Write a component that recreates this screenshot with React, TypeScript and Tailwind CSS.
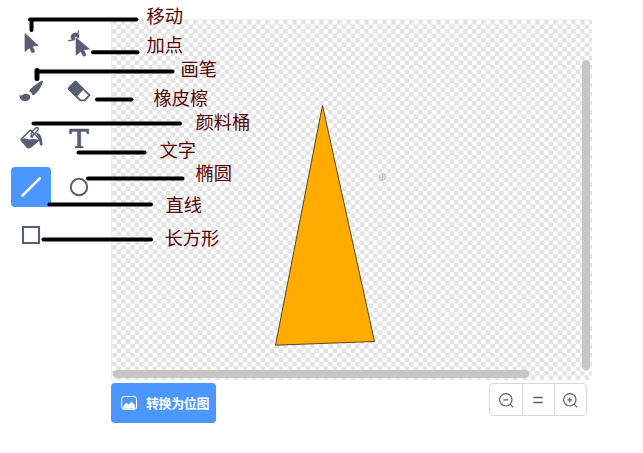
import React from "react";

const ink = "#575e75";

const labels = [
  { text: "移动", pos: "left-[146.5px] top-[2px]" },
  { text: "加点", pos: "left-[146.5px] top-[31px]" },
  { text: "画笔", pos: "left-[180.5px] top-[55px]" },
  { text: "橡皮檫", pos: "left-[153.5px] top-[84px]" },
  { text: "颜料桶", pos: "left-[195.5px] top-[108px]" },
  { text: "文字", pos: "left-[159.5px] top-[136px]" },
  { text: "椭圆", pos: "left-[195.5px] top-[159px]" },
  { text: "直线", pos: "left-[165.5px] top-[191px]" },
  { text: "长方形", pos: "left-[164.5px] top-[224px]" },
];

const tools: { name: string; active?: boolean; icon: React.ReactNode }[] = [
  {
    name: "select",
    icon: <path d="M14 10.500v18l4.500-3.800 2.200 4.600c1.100.900 3.300-.2 2.700-1.600l-2.100-4.400 5.800-.9Z" fill={ink} stroke={ink} strokeWidth=".7" strokeLinejoin="round" />,
  },
  {
    name: "reshape",
    icon: (
      <g fill={ink}>
        <path d="M9.200 17.600c4.500.2 9.800-3.200 10.300-10.200" fill="none" stroke={ink} strokeWidth="1.200" />
        <path d="M11.600 14.400Q12 10 17 9.600L20 11.500v3L15.500 17.500h-2.200Z" />
        <path d="M17 14.700v17.500l4.700-3.700 2.400 4.400c1.100.900 3.300-.2 2.700-1.600l-2.200-4.400 5.800-1Z" stroke={ink} strokeWidth=".6" strokeLinejoin="round" />
        <path d="M16.300 18v-3.700l2 .4" fill="none" stroke="#fff" strokeWidth=".8" />
      </g>
    ),
  },
  {
    name: "brush",
    icon: (
      <g fill={ink}>
        <path d="M31.500 10.200c.6.6.3 1.600-.4 3-1.700 3.800-4 7.400-6.800 9.800-1 .9-2.100 1.100-3 1.200-.1-2-1.300-3.300-3-3.700.4-1.700 1.500-3 3.200-4.300 2.700-2.100 5.900-4.600 8.300-6 .8-.5 1.300-.4 1.700 0Z" />
        <path d="M8.200 24.300c1.500.6 3 .2 4.100-.8 2.300-1.700 6.600-.7 7 2.100.2 2.800-2.100 4.600-5.300 4.600-3.400 0-5.100-2.400-5.800-5.900Z" />
      </g>
    ),
  },
  {
    name: "eraser",
    icon: (
      <g stroke={ink} strokeWidth="1.800" strokeLinejoin="round">
        <path d="m9.600 17.600 6.800-7L30.500 24.200l-4.700 5.200h-4.400Z" fill="#fff" />
        <path d="m9.600 17.600 6.800-7 7.500 7.400-6.700 7Z" fill={ink} />
      </g>
    ),
  },
  {
    name: "fill",
    icon: (
      <g>
        <path d="m9.900 20.400 9.400-9.400 9.600 9.300-9.400 7.900c-1.400.7-2.900.3-3.800-.6Z" fill="#fff" stroke={ink} strokeWidth="1.500" strokeLinejoin="round" />
        <path d="M9.300 21 13.500 19.200l5.500 1.300 3.500-.5 6.700.8-9.600 7.700c-1.600.8-3.300.5-4.400-.6Z" fill={ink} />
        <path d="m20.800 17.400 5.700-5.800c2-2.200 0-4.100-2-2.500l-2.700 2.800c-1.700 1.700-1.900 3.200-1.300 5" fill="none" stroke={ink} strokeWidth="1.400" />
        <circle cx="20.800" cy="17.200" r="1.500" fill={ink} />
        <path d="M25 13.400c3.200.6 5.300 2.600 6 7.200l.5 4.300c0 2-2.700 2-2.800 0-.2-2.800-.6-5.300-1.900-7.200Z" fill={ink} />
      </g>
    ),
  },
  {
    name: "text",
    icon: <path d="M10.500 9.900h19.300v5h-1.700l-1-2.300h-5.300v14.300l2.500.7v1.300h-8.300v-1.300l2.500-.7V12.600h-5.300l-1 2.300h-1.700Z" fill={ink} stroke={ink} strokeWidth=".4" />,
  },
  {
    name: "line",
    active: true,
    icon: <path d="M11.400 28.600 28.800 11.400" stroke="#fff" strokeWidth="2.700" strokeLinecap="round" />,
  },
  { name: "oval", icon: <circle cx="20" cy="20" r="8.200" fill="none" stroke={ink} strokeWidth="2" /> },
  { name: "rectangle", icon: <path d="M12 12h16v16H12Z" fill="none" stroke={ink} strokeWidth="2.100" /> },
];

function Toolbar() {
  return (
    <div className="mt-[23px] ml-[11px] grid w-[88px] shrink-0 grid-cols-2 content-start gap-2">
      {tools.map((t) => (
        <button
          key={t.name}
          aria-label={t.name}
          className={t.active ? "size-10 rounded bg-[#4c97ff]" : "size-10 rounded"}
        >
          <svg className="block size-10" viewBox="0 0 40 40">{t.icon}</svg>
        </button>
      ))}
    </div>
  );
}

function Canvas() {
  return (
    <div className="relative h-[361px] w-[481px] bg-white">
      <svg className="block h-full w-full" viewBox="111 19 481 361">
        <defs>
          <pattern id="checker" x="112.200" y="20" width="9" height="9" patternUnits="userSpaceOnUse">
            <path d="M0 0h4.500v4.500H0ZM4.500 4.500H9V9H4.500Z" fill="#e3e3e3" />
          </pattern>
        </defs>
        <rect x="111" y="19" width="481" height="361" fill="url(#checker)" />
        <path d="M111.500 380V19.500H589" fill="none" stroke="#e9eef2" />
        <path d="M322.500 105.500 374.500 341.500 275.500 345.200Z" fill="#ffab00" stroke="#5b481c" strokeWidth="1" strokeLinejoin="round" />
        <g fill="none" stroke="#c4c4c4" strokeWidth="1.200">
          <circle cx="382.500" cy="177" r="3" />
          <path d="M378.500 177h8M382.500 173v8" />
        </g>
      </svg>
      <div className="absolute top-[41px] right-[2px] h-[310px] w-2 rounded-full bg-[#bebebe]/85" />
      <div className="absolute bottom-[2px] left-[2px] h-2 w-[416px] rounded-full bg-[#bebebe]/85" />
    </div>
  );
}

function Footer() {
  return (
    <div className="mt-[3px] flex w-[476px] items-start justify-between">
      <button className="flex h-10 w-[105px] items-center rounded bg-[#4c97ff] pl-[10px] text-white">
        <svg className="h-4 w-4 shrink-0" viewBox="0 0 16 16">
          <rect x="0.700" y="1.500" width="14.800" height="13" rx="2.500" fill="none" stroke="#fff" />
          <path d="M2 11.200 5.300 7.600 7.500 9.800 10.500 6.500 14.200 10.500V12.800q0 1-1 1H3q-1 0-1-1Z" fill="#fff" />
        </svg>
        <span className="ml-[9px] text-[13px] leading-4 font-bold tracking-[-0.4px] whitespace-nowrap">转换为位图</span>
      </button>
      <div className="flex h-[33px] w-[98px] divide-x divide-[#d9d9d9] rounded border border-[#d9d9d9] bg-white">
        {["out", "reset", "in"].map((kind) => (
          <button
            key={kind}
            aria-label={kind}
            className={kind === "out" ? "flex w-[33px] items-center justify-center" : "flex flex-1 items-center justify-center pr-px"}
          >
            <svg className="size-4" viewBox="0 0 16 16" fill="none" stroke={ink} strokeWidth="1.200" strokeLinecap="round">
              {kind === "reset" ? (
                <path d="M4 5.500h8M4 10.500h8" strokeWidth="1.600" />
              ) : (
                <>
                  <circle cx="7.800" cy="7.800" r="6.200" />
                  <path d="m12.200 12.200 2.600 2.600M5.800 7.800h4" />
                  {kind === "in" && <path d="M7.800 5.800v4" />}
                </>
              )}
            </svg>
          </button>
        ))}
      </div>
    </div>
  );
}

function Annotations() {
  return (
    <div className="pointer-events-none absolute inset-0">
      <svg className="absolute inset-0 h-full w-full" viewBox="0 0 643 453" fill="none" stroke="#000" strokeWidth="4" strokeLinecap="round">
        <path d="M30 19.400H136.500M31.500 20v10" />
        <path d="M93 52.300H137.500" />
        <path d="M37 71.500H172.500" />
        <path d="M37 70.500v8" strokeWidth="5" />
        <path d="M97 99.500H131.500" />
        <path d="M33.500 123.500H180" />
        <path d="M78.500 152.400H144.500" />
        <path d="M88 178.500H182.500" />
        <path d="M49.500 204.500H151" />
        <path d="M43.500 239.500H151" />
      </svg>
      {labels.map((l) => (
        <span key={l.text} className={`absolute text-[18.3px] leading-[26px] whitespace-nowrap text-[#570505] ${l.pos}`}>
          {l.text}
        </span>
      ))}
    </div>
  );
}

export default function App() {
  return (
    <div className="relative flex h-[453px] w-[643px] overflow-hidden bg-white font-['Noto_Sans_CJK_SC',sans-serif]">
      <Toolbar />
      <main className="ml-3 pt-[19px]">
        <Canvas />
        <Footer />
      </main>
      <Annotations />
    </div>
  );
}
